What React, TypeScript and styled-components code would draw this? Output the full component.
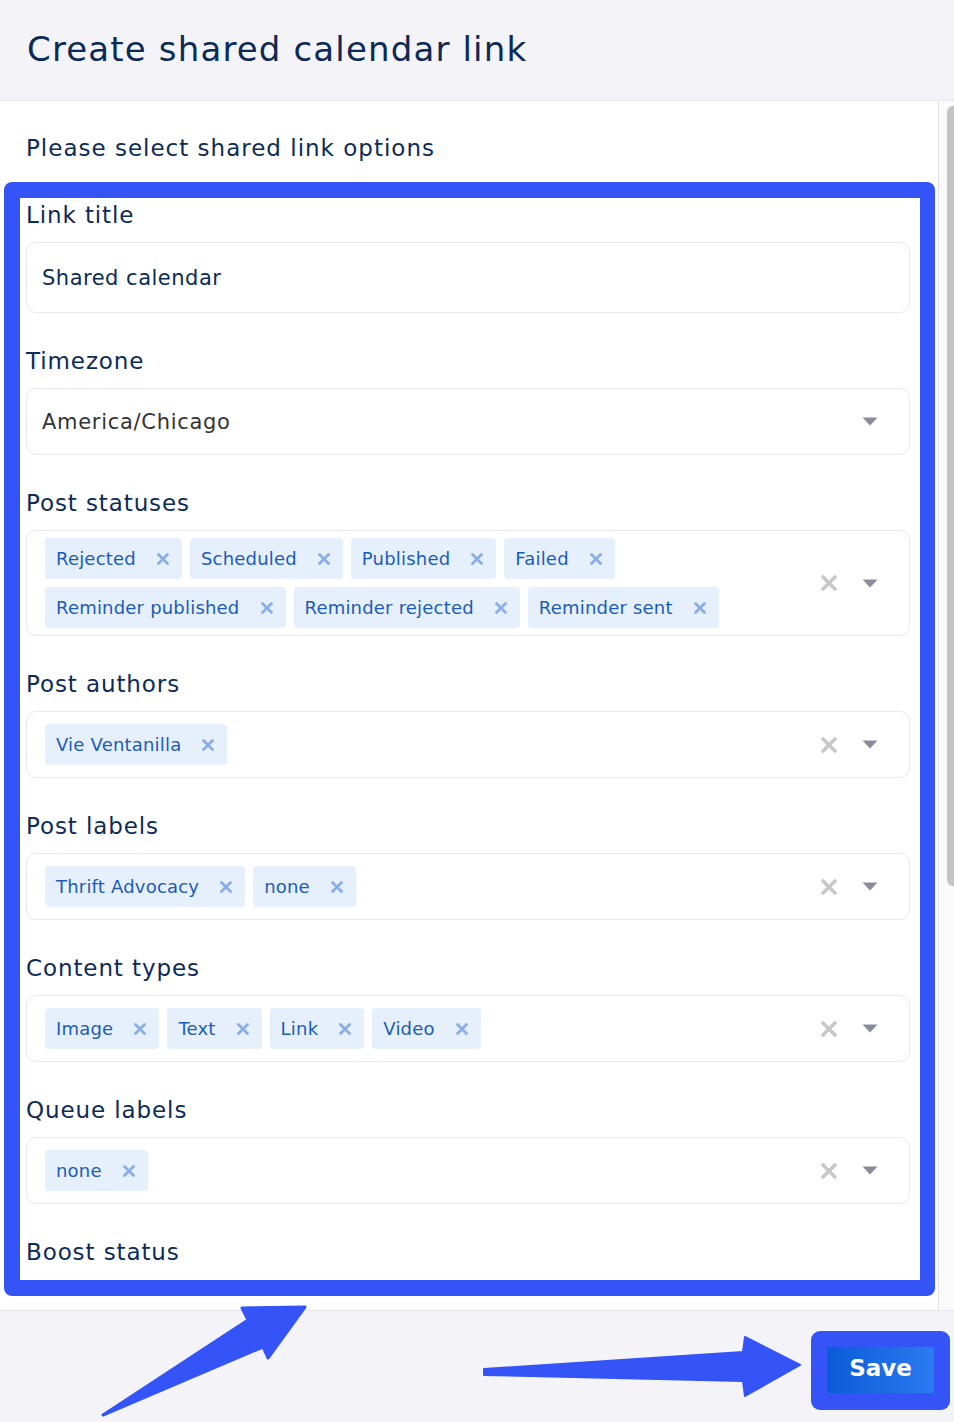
import * as React from 'react';
import styled, { createGlobalStyle } from 'styled-components';

const GlobalStyle = createGlobalStyle`
  html, body {
    margin: 0;
    padding: 0;
    background: #f4f4f8;
  }
  body {
    font-family: 'DejaVu Sans', 'Open Sans', sans-serif;
  }
  * {
    box-sizing: border-box;
  }
`;

type Field = {
  label: string;
  chips: string[];
};

const multiFields: Field[] = [
  {
    label: 'Post statuses',
    chips: [
      'Rejected',
      'Scheduled',
      'Published',
      'Failed',
      'Reminder published',
      'Reminder rejected',
      'Reminder sent',
    ],
  },
  { label: 'Post authors', chips: ['Vie Ventanilla'] },
  { label: 'Post labels', chips: ['Thrift Advocacy', 'none'] },
  { label: 'Content types', chips: ['Image', 'Text', 'Link', 'Video'] },
  { label: 'Queue labels', chips: ['none'] },
];

function ChipX() {
  return (
    <svg width="12" height="12" viewBox="0 0 12 12">
      <path d="M1.5 1.5 L10.5 10.5 M10.5 1.5 L1.5 10.5" stroke="#8badE6" strokeWidth="2.8" strokeLinecap="round" />
    </svg>
  );
}

function ClearX() {
  return (
    <svg width="16" height="16" viewBox="0 0 16 16">
      <path d="M2 2 L14 14 M14 2 L2 14" stroke="#c8c8cb" strokeWidth="3.6" strokeLinecap="round" />
    </svg>
  );
}

function Caret() {
  return (
    <svg width="16" height="9" viewBox="0 0 16 9">
      <path d="M0.5 0.5 H15.5 L8 8.5 Z" fill="#8b8b9c" />
    </svg>
  );
}

export default function App() {
  return (
    <>
      <GlobalStyle />
      <Modal>
        <Header>
          <Title>Create shared calendar link</Title>
        </Header>
        <Body>
          <Content>
            <Subtitle>Please select shared link options</Subtitle>
            <FieldBlock>
              <Label>Link title</Label>
              <TextInput>Shared calendar</TextInput>
            </FieldBlock>
            <FieldBlock>
              <Label>Timezone</Label>
              <SelectBox>
                <SelectValue>America/Chicago</SelectValue>
                <Indicators>
                  <Caret />
                </Indicators>
              </SelectBox>
            </FieldBlock>
            {multiFields.map(field => (
              <FieldBlock key={field.label}>
                <Label>{field.label}</Label>
                <SelectBox>
                  <ChipList>
                    {field.chips.map(chip => (
                      <Chip key={chip}>
                        <span>{chip}</span>
                        <ChipX />
                      </Chip>
                    ))}
                  </ChipList>
                  <Indicators>
                    <ClearX />
                    <Caret />
                  </Indicators>
                </SelectBox>
              </FieldBlock>
            ))}
            <Label>Boost status</Label>
          </Content>
          <ScrollTrack>
            <ScrollThumb />
          </ScrollTrack>
        </Body>
        <Footer>
          <SaveHighlight>
            <SaveButton>Save</SaveButton>
          </SaveHighlight>
        </Footer>
        <FormHighlight />
        <Arrows width="954" height="1422" viewBox="0 0 954 1422">
          <path
            d="M103 1415 L248 1320 L242 1308 L305 1307 L268 1358 L263 1347 Z"
            fill="#3454f8"
            stroke="#3454f8"
            strokeWidth="3"
            strokeLinejoin="round"
          />
          <path
            d="M484 1369 L743 1352 L745 1337 L800 1365 L745 1396 L743 1381 L484 1375 Z"
            fill="#3454f8"
            stroke="#3454f8"
            strokeWidth="2"
            strokeLinejoin="round"
          />
        </Arrows>
      </Modal>
    </>
  );
}

const Modal = styled.div`
  position: relative;
  width: 954px;
  height: 1422px;
  overflow: hidden;
  background: #f4f4f8;
  color: #0c2b57;
`;

const Header = styled.div`
  height: 101px;
  padding: 0 0 0 27px;
  display: flex;
  align-items: center;
  background: #f4f4f8;
  border-bottom: 1px solid #e6e6ec;
  border-top-right-radius: 14px;
`;

const Title = styled.h1`
  margin: 0;
  font-size: 34px;
  font-weight: 400;
  letter-spacing: 1.15px;
  color: #0b2a58;
  padding-bottom: 2px;
`;

const Body = styled.div`
  display: flex;
  height: 1210px;
  background: #fff;
  border-bottom: 1px solid #e6e6ec;
`;

const Content = styled.div`
  flex: 1;
  padding: 32px 28px 0 26px;
  overflow: hidden;
`;

const Subtitle = styled.div`
  font-size: 23px;
  line-height: 30px;
  letter-spacing: 1px;
  margin-bottom: 37px;
  color: #0c2b57;
`;

const FieldBlock = styled.div`
  margin-bottom: 33px;
`;

const Label = styled.div`
  font-size: 23px;
  line-height: 30px;
  letter-spacing: 0.9px;
  margin-bottom: 12px;
  color: #0c2b57;
`;

const TextInput = styled.div`
  height: 71px;
  display: flex;
  align-items: center;
  padding-left: 15px;
  border: 1px solid #e8e8ee;
  border-radius: 10px;
  font-size: 21px;
  letter-spacing: 0.5px;
  color: #0c2b57;
`;

const SelectBox = styled.div`
  min-height: 67px;
  display: flex;
  align-items: center;
  padding: 7px 0 7px 18px;
  border: 1px solid #e8e8ee;
  border-radius: 10px;
`;

const SelectValue = styled.div`
  flex: 1;
  font-size: 21px;
  letter-spacing: 0.7px;
  color: #333;
  margin-left: -3px;
`;

const ChipList = styled.div`
  flex: 1;
  display: flex;
  flex-wrap: wrap;
  gap: 8px 8px;
  padding-right: 60px;
`;

const Chip = styled.div`
  height: 41px;
  display: flex;
  align-items: center;
  gap: 21px;
  padding: 0 13px 0 11px;
  background: #e6effc;
  border-radius: 4px;
  font-size: 18px;
  letter-spacing: 0.2px;
  color: #1b5cb8;
`;

const Indicators = styled.div`
  display: flex;
  align-items: center;
  gap: 25px;
  padding-right: 31px;
  margin-left: auto;
`;

const ScrollTrack = styled.div`
  width: 16px;
  padding: 5px 0 0 8px;
  border-left: 1px solid #e2e2e6;
  background: #fafafa;
`;

const ScrollThumb = styled.div`
  width: 8px;
  height: 780px;
  background: #c4c4c4;
  border-radius: 6px 0 0 6px;
`;

const Footer = styled.div`
  height: 110px;
  display: flex;
  align-items: center;
  justify-content: flex-end;
  padding: 8px 4px 0 0;
  background: #f4f4f8;
`;

const SaveHighlight = styled.div`
  padding: 16px 16px 17px;
  background: #3454f8;
  border-radius: 9px;
`;

const SaveButton = styled.button`
  width: 107px;
  height: 46px;
  padding: 0 0 3px;
  border: none;
  border-radius: 2px;
  background: linear-gradient(90deg, #0b5bd8 0%, #2a7bf0 100%);
  color: #fff;
  font-family: 'DejaVu Sans', sans-serif;
  font-size: 23px;
  font-weight: 700;
  cursor: pointer;
`;

const FormHighlight = styled.div`
  position: absolute;
  left: 4px;
  top: 182px;
  width: 931px;
  height: 1114px;
  border: 16px solid #3454f8;
  border-right-width: 15px;
  border-radius: 8px;
  pointer-events: none;
`;

const Arrows = styled.svg`
  position: absolute;
  left: 0;
  top: 0;
  pointer-events: none;
`;
